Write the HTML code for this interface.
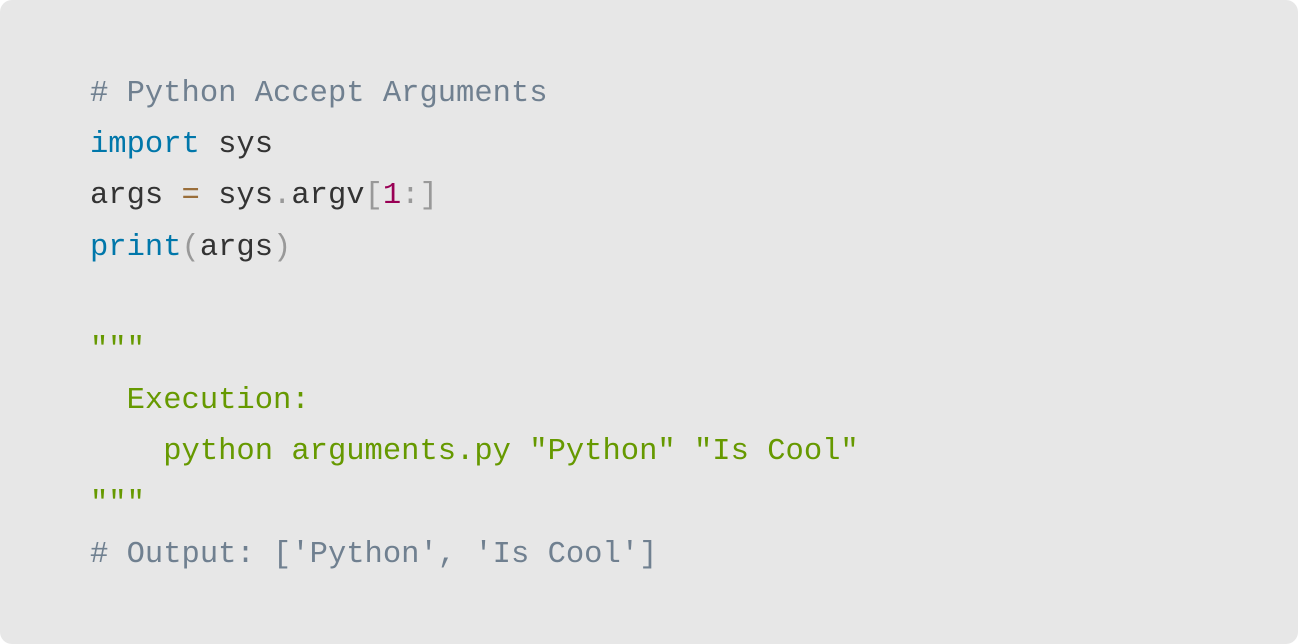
<!DOCTYPE html>
<html><head><style>
html,body{margin:0;padding:0;background:#fff;}
.box{position:absolute;left:0;top:0;width:1298px;height:644px;background:#e7e7e7;border-radius:12px;}
pre{position:absolute;left:90px;top:69px;margin:0;font-family:"Liberation Mono",monospace;font-size:30.5px;line-height:51.2px;color:#333;}
.c{color:#708090}.k{color:#07a}.p{color:#999}.o{color:#9a6e3a}.n{color:#905}.s{color:#690}
</style></head><body><div class="box"><pre><span class="c"># Python Accept Arguments</span>
<span class="k">import</span> sys
args <span class="o">=</span> sys<span class="p">.</span>argv<span class="p">[</span><span class="n">1</span><span class="p">:</span><span class="p">]</span>
<span class="k">print</span><span class="p">(</span>args<span class="p">)</span>

<span class="s">"""
  Execution:
    python arguments.py "Python" "Is Cool"
"""</span>
<span class="c"># Output: ['Python', 'Is Cool']</span></pre></div></body></html>
